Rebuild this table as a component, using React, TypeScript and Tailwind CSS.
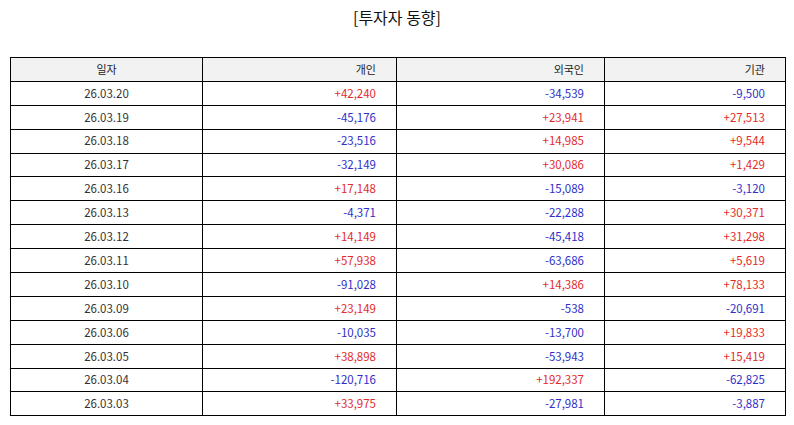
import React from 'react';

type Row = { date: string; person: number; foreign: number; inst: number };

const rows: Row[] = [
  { date: '26.03.20', person: 42240, foreign: -34539, inst: -9500 },
  { date: '26.03.19', person: -45176, foreign: 23941, inst: 27513 },
  { date: '26.03.18', person: -23516, foreign: 14985, inst: 9544 },
  { date: '26.03.17', person: -32149, foreign: 30086, inst: 1429 },
  { date: '26.03.16', person: 17148, foreign: -15089, inst: -3120 },
  { date: '26.03.13', person: -4371, foreign: -22288, inst: 30371 },
  { date: '26.03.12', person: 14149, foreign: -45418, inst: 31298 },
  { date: '26.03.11', person: 57938, foreign: -63686, inst: 5619 },
  { date: '26.03.10', person: -91028, foreign: 14386, inst: 78133 },
  { date: '26.03.09', person: 23149, foreign: -538, inst: -20691 },
  { date: '26.03.06', person: -10035, foreign: -13700, inst: 19833 },
  { date: '26.03.05', person: 38898, foreign: -53943, inst: 15419 },
  { date: '26.03.04', person: -120716, foreign: 192337, inst: -62825 },
  { date: '26.03.03', person: 33975, foreign: -27981, inst: -3887 },
];

const fmt = (n: number) => (n > 0 ? '+' : '-') + Math.abs(n).toLocaleString('en-US');

const Num: React.FC<{ value: number }> = ({ value }) => (
  <td
    className={`border border-black text-right pr-[20px] ${value > 0 ? 'text-[#e32b2b]' : 'text-[#2f2fc8]'}`}
  >
    {fmt(value)}
  </td>
);

export default function App() {
  return (
    <div className="w-[794px] h-[425px] bg-white font-['Noto_Sans_CJK_KR','Noto_Sans',sans-serif] text-[#333]">
      <h1 className="h-[36px] pt-[4px] text-center text-[16px] leading-[26px] text-[#111]">[투자자 동향]</h1>
      <div className="px-[10px] pt-[21px]">
        <table className="w-[775px] border-collapse table-fixed text-[11.5px]">
          <colgroup>
            <col className="w-[192px]" />
            <col className="w-[194px]" />
            <col className="w-[208px]" />
            <col className="w-[181px]" />
          </colgroup>
          <thead>
            <tr className="h-[23.9px] bg-[#f2f2f2] text-[#222]">
              <th className="border border-black font-normal text-center text-[11px]">일자</th>
              <th className="border border-black font-normal text-right pr-[20px] text-[11px]">개인</th>
              <th className="border border-black font-normal text-right pr-[20px] text-[11px]">외국인</th>
              <th className="border border-black font-normal text-right pr-[20px] text-[11px]">기관</th>
            </tr>
          </thead>
          <tbody>
            {rows.map((r) => (
              <tr key={r.date} className="h-[23.9px]">
                <td className="border border-black text-center">{r.date}</td>
                <Num value={r.person} />
                <Num value={r.foreign} />
                <Num value={r.inst} />
              </tr>
            ))}
          </tbody>
        </table>
      </div>
    </div>
  );
}
